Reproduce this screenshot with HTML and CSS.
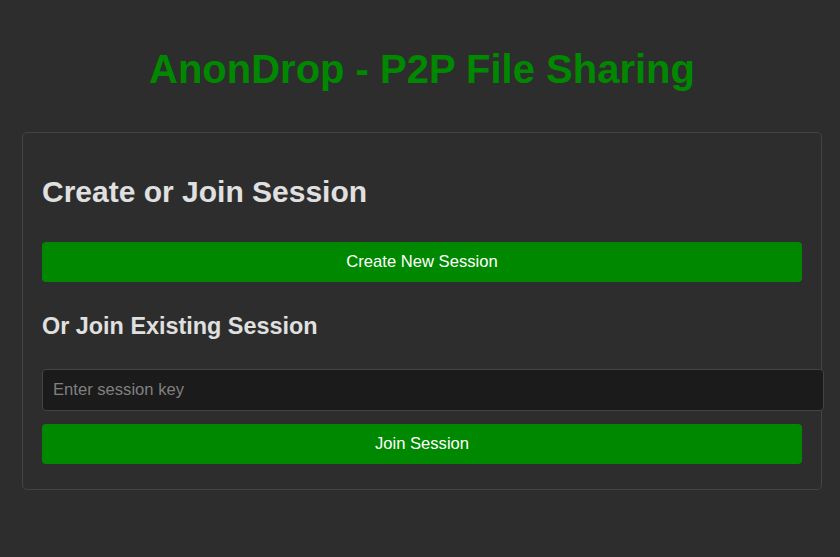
FILE: index.html
```html
<!DOCTYPE html>
<html>
<head>
<meta charset="utf-8">
<link rel="stylesheet" href="styles.css">
</head>
<body>
<div class="container">
  <h1 class="title">AnonDrop - P2P File Sharing</h1>
  <div class="card">
    <h2 class="heading">Create or Join Session</h2>
    <button class="btn">Create New Session</button>
    <h3 class="subheading">Or Join Existing Session</h3>
    <input class="field" type="text" placeholder="Enter session key">
    <button class="btn">Join Session</button>
  </div>
</div>
</body>
</html>
```
FILE: styles.css
```css
html, body {
  margin: 0;
  padding: 0;
  background: #2d2d2d;
}
body {
  font-family: "Liberation Sans", Arial, sans-serif;
  color: #e0e0e0;
}
.container {
  width: 800px;
  margin-left: 22px;
  padding-top: 46px;
}
.title {
  margin: 0 0 40px;
  text-align: center;
  color: #008800;
  font-size: 40px;
  line-height: 46px;
  font-weight: bold;
}
.card {
  border: 1px solid #444;
  border-radius: 5px;
  padding: 20px 19px 25px;
  display: flex;
  flex-direction: column;
  align-items: flex-start;
}
.heading {
  margin: 22px 0 33px;
  font-size: 30px;
  line-height: 34px;
  font-weight: bold;
}
.btn {
  width: 760px;
  height: 40px;
  border: none;
  border-radius: 4px;
  background: #008800;
  color: #fff;
  font-family: "Liberation Sans", Arial, sans-serif;
  font-size: 16.6px;
  padding: 0;
}
.subheading {
  margin: 30px 0 29px;
  font-size: 23.4px;
  line-height: 28px;
  font-weight: bold;
}
.field {
  width: 760px;
  padding: 10px;
  height: 20px;
  border: 1px solid #444;
  border-radius: 4px;
  background: #1b1b1b;
  color: #e0e0e0;
  font-family: "Liberation Sans", Arial, sans-serif;
  font-size: 16.6px;
  margin: 0 0 13px;
  box-sizing: content-box;
}
.field::placeholder {
  color: #808080;
}
```
